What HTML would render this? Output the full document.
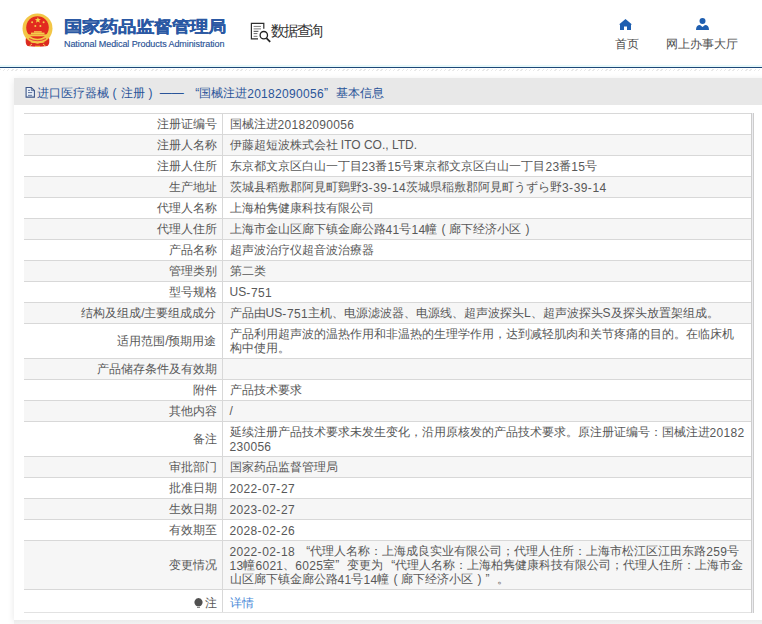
<!DOCTYPE html>
<html><head><meta charset="utf-8">
<style>
*{margin:0;padding:0;box-sizing:border-box;}
html,body{width:762px;height:624px;overflow:hidden;background:#fff;font-family:"Liberation Sans",sans-serif;}
#hdr{position:absolute;left:0;top:0;width:762px;height:67px;background:#fff;}
#emblem{position:absolute;left:21px;top:12px;width:34px;height:36px;}
#t1{position:absolute;left:64px;top:15.5px;transform:scaleY(0.87);transform-origin:0 10.5px;font-size:18px;font-weight:bold;color:#2a58a3;-webkit-text-stroke:0.3px #2a58a3;white-space:nowrap;line-height:22px;}
#t2{position:absolute;left:64px;top:38.5px;font-size:9px;color:#2b5396;-webkit-text-stroke:0.15px #2b5396;white-space:nowrap;line-height:11px;letter-spacing:-0.08px;}
#dq{position:absolute;left:250px;top:22px;width:22px;height:21px;}
#dqt{position:absolute;left:270.8px;top:21px;font-size:14px;color:#333;white-space:nowrap;line-height:18px;letter-spacing:-1.1px;transform:scaleY(1.05);transform-origin:0 0;}
.nav{position:absolute;top:17px;text-align:center;font-size:12px;color:#4e4e4e;white-space:nowrap;line-height:14px;}
#line{position:absolute;left:0;top:65px;width:762px;height:3px;background:linear-gradient(#e6f8fa 0 2px,#1d4878 2px 3px);}
#hatch{position:absolute;left:0;top:69px;width:762px;height:2px;background:repeating-linear-gradient(135deg,#e9e9e9 0 1px,transparent 1px 3px);}
#panel{position:absolute;left:14px;top:78px;width:760px;height:542px;background:#fff;box-shadow:0 2px 7px rgba(0,0,0,0.10);}
#ph{position:absolute;left:0;top:0;width:100%;height:27px;background:#e8e8e8;}
#pht{position:absolute;left:22.5px;top:8px;font-size:12px;color:#2a5499;white-space:nowrap;line-height:15px;}
#bottom{position:absolute;left:14px;top:620px;width:748px;height:4px;background:linear-gradient(#ececec,#f2f2f2);}
table{position:absolute;left:24px;top:113px;width:727px;border-collapse:collapse;table-layout:fixed;font-size:12px;color:#585858;}
td{border-top:1px solid #d8d8d8;border-bottom:1px solid #d8d8d8;padding:3px 6px 3px 7px;line-height:14px;vertical-align:middle;white-space:nowrap;}
td.l{width:198px;text-align:right;border-right:1px solid #d8d8d8;padding-right:5px;}
tr.g td{background:#f6f6f6;}
tr.last td{border-bottom-color:#e2e2e2;}
tr.last td{height:23px;padding-top:5px;padding-bottom:2px;}
#rb{position:absolute;left:751px;top:113px;width:3px;height:500px;border-left:1px solid #cdcdcd;border-right:1px solid #cdcdcd;background:#ececf0;}
a{color:#4a8ad8;text-decoration:none;font-size:12px;}
.n{letter-spacing:0.3px;position:relative;top:0.5px;}
.h{letter-spacing:0.8px;position:relative;top:0.5px;}
.ql{display:inline-block;width:12px;text-align:right;}
.qr{display:inline-block;width:12px;text-align:left;}
.pp{display:inline-block;width:12px;text-align:center;}
.bulb{vertical-align:-1px;margin-right:2px;}
</style></head><body>
<div id="hdr">
  <svg id="emblem" viewBox="0 0 34 36">
    <path d="M5 25.5 Q3.8 31.5 6.5 34 Q16.5 35.5 26.5 34 Q29.2 31.5 28 25.5 Z" fill="#dc2a20"/>
    <circle cx="16.5" cy="16.4" r="15" fill="#f3c646"/>
    <circle cx="16.5" cy="15.5" r="11.3" fill="#e22a1f"/>
    <path d="M16.9 5.1 l.8 2 2.2.1 -1.7 1.4 .6 2.1 -1.9-1.2 -1.9 1.2 .6-2.1 -1.7-1.4 2.2-.1z" fill="#f6d04a"/>
    <circle cx="11.1" cy="10.2" r="1" fill="#f4c94a"/><circle cx="22.6" cy="10.2" r="1" fill="#f4c94a"/>
    <circle cx="14.3" cy="14" r="1" fill="#f4c94a"/><circle cx="19.4" cy="14" r="1" fill="#f4c94a"/>
    <rect x="13" y="19.2" width="7.7" height="1.4" fill="#f4cb4c"/>
    <rect x="10" y="20.6" width="13.5" height="1.8" fill="#f4cb4c"/>
    <rect x="6.2" y="22.4" width="20.6" height="1.9" fill="#f3c646"/>
    <path d="M8 26.5 Q16.5 31 25 26.5" stroke="#e8483a" stroke-width="1.2" fill="none"/>
    <path d="M9 31 Q12.5 28.5 16.5 30 Q20.5 28.5 24 31 Q20 30.3 16.5 31.6 Q13 30.3 9 31Z" fill="#f4c94a"/>
    <path d="M8.5 34 L11 32 M24.5 34 L22 32 M14 34.3 H19" stroke="#f4cf5a" stroke-width="1" fill="none"/>
  </svg>
  <div id="t1">国家药品监督管理局</div>
  <div id="t2">National Medical Products Administration</div>
  <svg id="dq" viewBox="0 0 22 21">
    <path d="M8 16.8 H1.4 V1.4 H13.8 V6.8" fill="none" stroke="#2e2e2e" stroke-width="1.2"/>
    <rect x="3.6" y="3.9" width="7.4" height="1.1" fill="#888"/>
    <rect x="3.6" y="6.2" width="7.4" height="1.3" fill="#999"/>
    <rect x="3.6" y="8.8" width="4.8" height="1.1" fill="#555"/>
    <rect x="3.6" y="11" width="3.8" height="1.1" fill="#777"/>
    <rect x="3.6" y="13.8" width="3.8" height="1.1" fill="#888"/>
    <circle cx="13.8" cy="13.2" r="3.7" fill="#fff" stroke="#222" stroke-width="1.3"/>
    <path d="M16.4 16.1 L20.2 19.9" stroke="#222" stroke-width="1.7"/>
  </svg>
  <div id="dqt">数据查询</div>
  <div class="nav" style="left:609px;width:36px;">
    <svg width="13" height="11" viewBox="0 0 13 11" style="display:block;margin:2px auto 7px;position:relative;left:-1.5px;"><path d="M6.5 0 L13 5.5 L12 5.5 L12 11 L8 11 L8 7.5 L5 7.5 L5 11 L1 11 L1 5.5 L0 5.5 Z" fill="#1f5fb0"/></svg>
    首页
  </div>
  <div class="nav" style="left:664px;width:76px;">
    <svg width="13" height="12" viewBox="0 0 13 12" style="display:block;margin:1px auto 7px;"><circle cx="6.5" cy="3" r="3" fill="#1f5fb0"/><path d="M0 12 Q0 7 4 7 L6.5 9 L9 7 Q13 7 13 12 Z" fill="#1f5fb0"/></svg>
    网上办事大厅
  </div>
</div>
<div id="line"></div>
<div id="hatch"></div>
<div id="panel">
  <div id="ph">
    <svg style="position:absolute;left:11px;top:8px" width="11" height="13" viewBox="0 0 11 13"><path d="M1.1 1.5 H6.3 L9.4 4.6 V11.1 H1.1 Z" fill="#eef4fb" stroke="#3d5688" stroke-width="1.1"/><path d="M6.3 1.5 V4.6 H9.4" fill="none" stroke="#3d5688" stroke-width="0.8"/><path d="M3 4.3 H5 M3 6.6 H7.2 M3 9.3 H7.2" stroke="#4a6090" stroke-width="0.9"/></svg>
    <div id="pht">进口医疗器械<span class="pp">(</span>注册<span class="pp">)</span> —— <span class="ql">“</span>国械注进<span class="n">20182090056</span><span class="qr">”</span>基本信息</div>
  </div>
</div>
<table>
<tr><td class="l">注册证编号</td><td class="v">国械注进<span class="n">20182090056</span></td></tr>
<tr class="g"><td class="l">注册人名称</td><td class="v">伊藤超短波株式会社 ITO CO., LTD.</td></tr>
<tr><td class="l">注册人住所</td><td class="v">东京都文京区白山一丁目<span class="n">23</span>番<span class="n">15</span>号東京都文京区白山一丁目<span class="n">23</span>番<span class="n">15</span>号</td></tr>
<tr class="g"><td class="l">生产地址</td><td class="v">茨城县稻敷郡阿見町鷄野<span class="n">3</span><span class="h">-</span><span class="n">39</span><span class="h">-</span><span class="n">14</span>茨城県稲敷郡阿見町うずら野<span class="n">3</span><span class="h">-</span><span class="n">39</span><span class="h">-</span><span class="n">14</span></td></tr>
<tr><td class="l">代理人名称</td><td class="v">上海柏隽健康科技有限公司</td></tr>
<tr class="g"><td class="l">代理人住所</td><td class="v">上海市金山区廊下镇金廊公路<span class="n">41</span>号<span class="n">14</span>幢<span class="pp">(</span>廊下经济小区<span class="pp">)</span></td></tr>
<tr><td class="l">产品名称</td><td class="v">超声波治疗仪超音波治療器</td></tr>
<tr class="g"><td class="l">管理类别</td><td class="v">第二类</td></tr>
<tr><td class="l">型号规格</td><td class="v">US<span class="h">-</span><span class="n">751</span></td></tr>
<tr class="g"><td class="l">结构及组成/主要组成成分</td><td class="v">产品由US<span class="h">-</span><span class="n">751</span>主机、电源滤波器、电源线、超声波探头L、超声波探头S及探头放置架组成。</td></tr>
<tr><td class="l">适用范围/预期用途</td><td class="v">产品利用超声波的温热作用和非温热的生理学作用，达到减轻肌肉和关节疼痛的目的。在临床机<br>构中使用。</td></tr>
<tr class="g"><td class="l">产品储存条件及有效期</td><td class="v"></td></tr>
<tr><td class="l">附件</td><td class="v">产品技术要求</td></tr>
<tr class="g"><td class="l">其他内容</td><td class="v">/</td></tr>
<tr><td class="l">备注</td><td class="v">延续注册产品技术要求未发生变化，沿用原核发的产品技术要求。原注册证编号：国械注进<span class="n">20182</span><br><span class="n">230056</span></td></tr>
<tr class="g"><td class="l">审批部门</td><td class="v">国家药品监督管理局</td></tr>
<tr><td class="l">批准日期</td><td class="v"><span class="n">2022</span><span class="h">-</span><span class="n">07</span><span class="h">-</span><span class="n">27</span></td></tr>
<tr class="g"><td class="l">生效日期</td><td class="v"><span class="n">2023</span><span class="h">-</span><span class="n">02</span><span class="h">-</span><span class="n">27</span></td></tr>
<tr><td class="l">有效期至</td><td class="v"><span class="n">2028</span><span class="h">-</span><span class="n">02</span><span class="h">-</span><span class="n">26</span></td></tr>
<tr class="g"><td class="l">变更情况</td><td class="v"><span class="n">2022</span><span class="h">-</span><span class="n">02</span><span class="h">-</span><span class="n">18</span> <span class="ql">“</span>代理人名称：上海成良实业有限公司；代理人住所：上海市松江区江田东路<span class="n">259</span>号<br><span class="n">13</span>幢<span class="n">6021</span>、<span class="n">6025</span>室<span class="qr">”</span>变更为<span class="ql">“</span>代理人名称：上海柏隽健康科技有限公司；代理人住所：上海市金<br>山区廊下镇金廊公路<span class="n">41</span>号<span class="n">14</span>幢<span class="pp">(</span>廊下经济小区<span class="pp">)</span><span class="qr">”</span>。</td></tr>
<tr class="last"><td class="l"><svg class="bulb" width="9" height="10" viewBox="0 0 9 10"><path d="M4.5 0 A4.3 4.3 0 0 1 7.2 7.4 L6 8.2 H3 L1.8 7.4 A4.3 4.3 0 0 1 4.5 0Z" fill="#505050"/><rect x="3" y="8.8" width="3" height="1.2" fill="#888"/></svg>注</td><td class="v"><a>详情</a></td></tr>
</table>
<div id="rb"></div>
<div id="bottom"></div>
</body></html>
